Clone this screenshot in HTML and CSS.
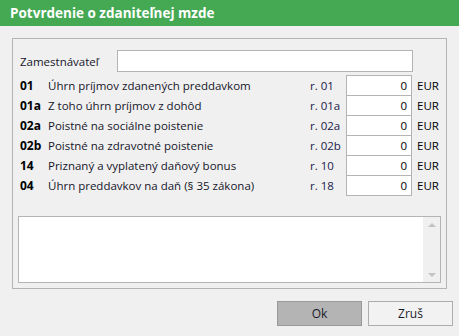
FILE: index.html
```html
<!DOCTYPE html>
<html lang="sk">
<head>
<meta charset="utf-8">
<title>Potvrdenie o zdaniteľnej mzde</title>
<link rel="stylesheet" href="styles.css">
</head>
<body>
<div class="titlebar">Potvrdenie o zdaniteľnej mzde</div>
<div class="group">
  <div class="employer">
    <span class="emp-label">Zamestnávateľ</span>
    <div class="emp-input"></div>
  </div>
  <div class="rows">
    <span class="code">01</span><span class="label">Úhrn príjmov zdanených preddavkom</span><span class="ref">r. 01</span><div class="field">0</div><span class="unit">EUR</span>
    <span class="code">01a</span><span class="label">Z toho úhrn príjmov z dohôd</span><span class="ref">r. 01a</span><div class="field">0</div><span class="unit">EUR</span>
    <span class="code">02a</span><span class="label">Poistné na sociálne poistenie</span><span class="ref">r. 02a</span><div class="field">0</div><span class="unit">EUR</span>
    <span class="code">02b</span><span class="label">Poistné na zdravotné poistenie</span><span class="ref">r. 02b</span><div class="field">0</div><span class="unit">EUR</span>
    <span class="code">14</span><span class="label">Priznaný a vyplatený daňový bonus</span><span class="ref">r. 10</span><div class="field">0</div><span class="unit">EUR</span>
    <span class="code">04</span><span class="label">Úhrn preddavkov na daň (§ 35 zákona)</span><span class="ref">r. 18</span><div class="field">0</div><span class="unit">EUR</span>
  </div>
  <div class="memo">
    <div class="memo-text"></div>
    <div class="scrollbar">
      <span class="arrow up"></span>
      <span class="arrow down"></span>
    </div>
  </div>
</div>
<div class="buttons">
  <div class="btn btn-ok">Ok</div>
  <div class="btn btn-cancel">Zruš</div>
</div>
</body>
</html>
```
FILE: styles.css
```css
* { box-sizing: border-box; }
html, body { margin: 0; padding: 0; }
body {
  width: 459px;
  height: 336px;
  background: #f0f0f0;
  font-family: "Open Sans", "Noto Sans", sans-serif;
  font-size: 11.5px;
  color: #16162a;
  overflow: hidden;
}
.titlebar {
  height: 26px;
  background: #45a954;
  color: #fff;
  font-weight: bold;
  font-size: 13.5px;
  line-height: 26px;
  padding-left: 10px;
}
.group {
  margin: 12px 0 0 12px;
  width: 435px;
  height: 251px;
  border: 1px solid #b4b4b4;
  padding: 11px 5px 0 5px;
  display: flex;
  flex-direction: column;
}
.employer {
  display: flex;
  align-items: center;
  height: 22px;
  padding-left: 2px;
}
.emp-label { width: 97px; }
.emp-input {
  width: 296px;
  height: 22px;
  background: #fff;
  border: 1px solid #b4b4b4;
}
.rows {
  margin-top: 3px;
  padding-left: 2px;
  display: grid;
  grid-template-columns: 28px 262px 36px 66px auto;
  grid-auto-rows: 20px;
  align-items: center;
}
.code { font-weight: bold; font-size: 12px; color: #000; }
.ref { color: #1a1a4a; }
.field {
  height: 21px;
  align-self: start;
  background: #fff;
  border: 1px solid #b4b4b4;
  text-align: right;
  padding-right: 4px;
  line-height: 20px;
  color: #000;
}
.unit { padding-left: 5px; color: #000; }
.memo {
  margin-top: auto;
  margin-bottom: 5px;
  height: 67px;
  border: 1px solid #b4b4b4;
  background: #fff;
  display: flex;
}
.memo-text { flex: 1; }
.scrollbar {
  width: 17px;
  background: #f0f0f0;
  display: flex;
  flex-direction: column;
  justify-content: space-between;
  align-items: center;
  padding: 6px 0 5px;
}
.arrow {
  width: 0;
  height: 0;
  border-left: 4px solid transparent;
  border-right: 4px solid transparent;
}
.arrow.up { border-bottom: 4px solid #c2c2c2; }
.arrow.down { border-top: 4px solid #c2c2c2; }
.buttons {
  display: flex;
  justify-content: flex-end;
  gap: 6px;
  margin-top: 12px;
  padding-right: 6px;
}
.btn {
  width: 85px;
  height: 25px;
  border: 1px solid #adadad;
  text-align: center;
  line-height: 23px;
  font-size: 12px;
  color: #1a1a2a;
}
.btn-ok { background: #b4b4b4; border-color: #999; }
.btn-cancel { background: #f2f2f2; }
```
